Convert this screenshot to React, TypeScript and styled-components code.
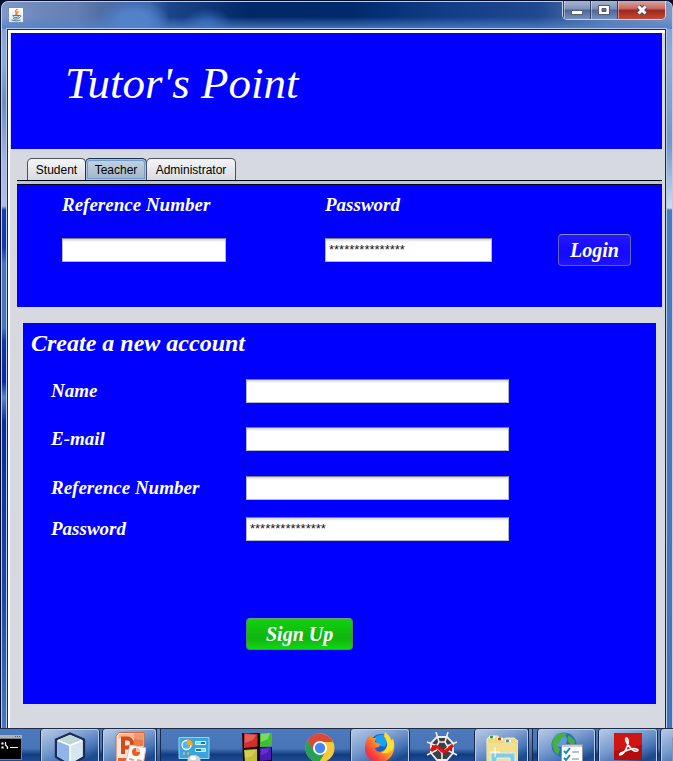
import React from "react";
import styled, { createGlobalStyle, css } from "styled-components";

const script = `"Monotype Corsiva", "Liberation Serif", serif`;

const GlobalStyle = createGlobalStyle`
  *, *::before, *::after { box-sizing: border-box; }
  body { margin: 0; background: #06102c; font-family: "Liberation Sans", Arial, sans-serif; }
  button, input { font: inherit; margin: 0; }
`;

const Desktop = styled.div`
  min-height: 100vh;
  display: flex;
  flex-direction: column;
  overflow: hidden;
`;

const AppWindow = styled.section`
  flex: 1;
  display: flex;
  flex-direction: column;
  margin: 1px 0 0 1px;
  padding: 0 6px 0 5px;
  border: 1px solid #b9cdea;
  border-bottom: 0;
  border-radius: 7px 7px 0 0;
  background:
    linear-gradient(180deg, #7f9fd0 0, #8fabd8 60px, #6d8ebc 100px, #a9b6e2 160px, #b4bcec 204px, #1a3cae 208px, #1836b4 245px, #4878c0 262px, #4878c0 325px, #1434a8 340px, #0c28a4 380px, #5a84cc 395px, #0d2a9c 420px, #2046ac 600px, #4a78be 100%) left / 6px 100% no-repeat,
    linear-gradient(180deg, #7f9fd0 0, #8fabd8 60px, #7496c8 140px, #cfdaf0 206px, #4a7abf 208px, #4474b8 100%) right / 7px 100% no-repeat,
    #4a76ba;
`;

const TitleBar = styled.header`
  display: flex;
  justify-content: space-between;
  align-items: flex-start;
  height: 27px;
  margin: 0 -6px 0 -5px;
  padding: 0 6px;
  border-radius: 6px 6px 0 0;
  background:
    linear-gradient(180deg, rgba(90, 140, 210, 0) 55%, rgba(80, 130, 205, 0.85) 100%),
    radial-gradient(ellipse 36px 20px at 132px 18px, rgba(84, 132, 204, 0.9) 40%, rgba(84, 132, 204, 0) 100%),
    radial-gradient(ellipse 24px 14px at 205px 20px, rgba(47, 98, 176, 0.9) 20%, rgba(47, 98, 176, 0) 100%),
    linear-gradient(90deg, #8098cc 0, #6c86b8 6%, #6480b4 11%, #506ea4 15%, #3c64ac 22%, #1c4488 25%, #002868 37%, #002a6c 52%, #123c86 66%, #1f4890 80%, #5f7cb0 90%, #7e96c4 100%);
`;

const JavaBadge = styled.span`
  display: flex;
  margin-top: 5px;
  border: 1px solid #7490b4;
  background: linear-gradient(#ffffff, #dfe7ef);
`;

const Controls = styled.div`
  display: flex;
  height: 19px;
  margin-top: -1px;
  border: 1px solid #c8d4ea;
  border-top: 0;
  border-radius: 0 0 5px 5px;
  overflow: hidden;
`;

const ControlButton = styled.button<{ $close?: boolean }>`
  display: flex;
  align-items: center;
  justify-content: center;
  width: ${(p) => (p.$close ? 48 : 27)}px;
  padding: 0;
  border: 0;
  border-left: 1px solid #35425e;
  box-shadow: inset 1px 0 rgba(255, 255, 255, 0.4);
  background: ${(p) =>
    p.$close
      ? "linear-gradient(#d8a8a4, #c4625c 45%, #a02418 50%, #c04c38)"
      : "linear-gradient(#a8b4d0, #7e90b8 45%, #4c6498 50%, #7890c0)"};
`;

const Client = styled.main`
  flex: 1;
  display: flex;
  flex-direction: column;
  border: 1px solid #18284c;
  border-bottom: 0;
  background: #d6d9df;
  box-shadow: 0 0 0 1px #b4c8e8, inset 2px 2px #ffffff, inset 0 3px #fffff0;
  padding: 3px 3px 24px 3px;
`;

const Banner = styled.div`
  height: 116px;
  padding: 26px 54px;
  background: #0000ff;
`;

const Brand = styled.h1`
  margin: 0;
  color: #ffffff;
  font: italic 400 45px/48px ${script};
  white-space: nowrap;
`;

const TabList = styled.div`
  display: flex;
  margin: 9px 0 0 6px;
  padding-left: 10px;
  border-bottom: 1px solid #000014;
`;

const Tab = styled.button<{ $width: number; $active?: boolean }>`
  min-width: ${(p) => p.$width}px;
  height: 22px;
  padding: 0 7px;
  margin-right: -1px;
  border: 1px solid #4c5058;
  border-bottom: 0;
  border-radius: 5px 5px 0 0;
  background: linear-gradient(#f4f5f7, #d8dbe2);
  color: #000000;
  font-size: 12px;
  line-height: 20px;
  white-space: nowrap;
  ${(p) =>
    p.$active &&
    css`
      border-color: #1c3450;
      background: linear-gradient(#c6d3e0, #9fb4c8);
      box-shadow: inset 0 0 0 1px #a8c4e0, inset 0 0 0 2px #70a0d0;
    `}
`;

const LoginPanel = styled.form`
  display: grid;
  grid-template-columns: 263fr 233fr 104fr;
  align-items: start;
  margin-left: 6px;
  height: 126px;
  padding-left: 45px;
  border-top: 3px solid #b4c8dc;
  background: #0000ff;
  box-shadow: inset 0 1px #000014;
`;

const LoginField = styled.div`
  display: flex;
  flex-direction: column;
  gap: 21px;
  padding-top: 9px;
`;

const Label = styled.label`
  color: #ffffff;
  font: italic 700 19px/24px ${script};
  white-space: nowrap;
`;

const TextInput = styled.input<{ $width: number }>`
  width: ${(p) => p.$width}px;
  height: 24px;
  padding: 0 3px 1px;
  border: 1px solid #b4b8c0;
  border-top-color: #808080;
  border-radius: 0;
  outline: 0;
  background: linear-gradient(#d4d4d4, #ffffff 3px);
  color: #141414;
  font-size: 13px;
`;

const ActionButton = styled.button<{ $green?: boolean }>`
  justify-self: start;
  height: 32px;
  padding: 0 ${(p) => (p.$green ? 19 : 11)}px;
  border: 1px solid ${(p) => (p.$green ? "#4c8a50" : "#6464b4")};
  border-top-color: ${(p) => (p.$green ? "#70a070" : "#8888c4")};
  border-radius: 4px;
  background: ${(p) =>
    p.$green ? "linear-gradient(#10d010, #10b410 65%, #12d812)" : "linear-gradient(#2418ff, #1408ff 60%, #2014ff)"};
  color: #ffffff;
  font: italic 700 20px/28px ${script};
  white-space: nowrap;
`;

const LoginAction = styled.div`
  padding-top: 50px;
`;

const SignUpPanel = styled.form`
  flex: 1;
  margin: 16px 6px 0 12px;
  padding: 6px 8px 53px;
  background: #0000ff;
`;

const PanelTitle = styled.h2`
  margin: 0;
  color: #ffffff;
  font: italic 700 24px/28px ${script};
`;

const FieldRow = styled.div<{ $gap: number }>`
  display: grid;
  grid-template-columns: 195px 1fr;
  align-items: center;
  height: 24px;
  margin: ${(p) => p.$gap}px 0 0 20px;
`;

const SignUpAction = styled.div`
  margin: 77px 0 0 215px;
`;

const Taskbar = styled.nav`
  flex: none;
  display: flex;
  height: 33px;
  overflow: hidden;
  border-top: 1px solid #1c2c44;
  background: linear-gradient(#4c7abc, #4874b8 60%, #123c80 80%, #1c4c94);
`;

const Task = styled.button<{ $w: number; $open?: boolean; $top?: number; $start?: boolean }>`
  flex: none;
  display: flex;
  align-items: flex-start;
  justify-content: ${(p) => (p.$start ? "flex-start" : "center")};
  width: ${(p) => p.$w}px;
  height: 40px;
  padding: ${(p) => p.$top ?? 3}px 0 0;
  border: 0;
  background: none;
  ${(p) =>
    p.$open &&
    css`
      border: 1px solid #b8cce8;
      border-bottom: 0;
      border-radius: 3px 3px 0 0;
      padding-top: ${(p.$top ?? 3) - 1}px;
      box-shadow: -1px 0 #14284c, 1px 0 #14284c;
      background: linear-gradient(155deg, #b4c8e4 0, #7c9ed0 35%, #4876b8 60%, #1c488c 78%, #2c5ca4 100%);
    `}
`;

const StackEdge = styled.span`
  flex: none;
  width: 5px;
  margin-right: 1px;
  border-right: 1px solid #14284c;
  border-left: 1px solid #14284c;
  background: linear-gradient(#6c92c8, #2c5898);
`;

const Spacer = styled.span<{ $w: number }>`
  flex: none;
  width: ${(p) => p.$w}px;
`;

const JavaIcon = () => (
  <svg width="14" height="14" viewBox="0 0 14 14" fill="none">
    <path d="M8.500 1C4 3.500 9 4 6.500 7M9.500 3.500C6.500 5 9 5.500 7.500 7" stroke="#ed852c" strokeWidth="1.400" />
    <path d="M3.500 7.500h6.500M4 8.500c1 1.500 5 1 6 0M4 10.500c2 1 4 .7 5.500 0M10 7.500c3-.8 2 2-.5 2.500M2.500 12c3 1.200 7 1 9 0" stroke="#4e7896" />
  </svg>
);

const CmdIcon = () => (
  <svg width="22" height="25" viewBox="0 0 22 25">
    <rect x="-2" width="24" height="25" fill="#777d83" />
    <rect x="-2" width="24" height="3" fill="#a8b0b8" />
    <path d="M15 1.500h1M17 1.500h1M19 1.500h1" stroke="#555" />
    <rect x="-2" y="4" width="23" height="20" fill="#000" />
    <path d="M2 8h1v1H2zM2 12h1v1H2zM5.500 7v3l2 2v2M10 12.500h8" stroke="#fff" fill="none" strokeWidth="1.200" />
  </svg>
);

const CubeIcon = () => (
  <svg width="32" height="34" viewBox="0 0 32 34">
    <path d="M16 1.500 30 7.500V25L16 33 2 25V7.500z" fill="#dce9ef" stroke="#1d2a55" strokeWidth="2.400" strokeLinejoin="round" />
    <path d="m16 3 12 5-12 5L4 8z" fill="#bdd7d4" />
    <path d="M3.500 9 16 14v18L3.500 24.500z" fill="#8fb4ec" />
    <path d="M28.500 9 16 14v18l12.500-7.500z" fill="#d4e6ef" />
    <path d="M4 8.500 16 13.500l12-5M16 14v18" stroke="#fff" strokeWidth="1.600" fill="none" />
  </svg>
);

const PowerPointIcon = () => (
  <svg width="32" height="32" viewBox="0 0 32 32">
    <path d="M5 .500h25V32H2V4z" fill="#fbe4d8" stroke="#d8623a" />
    <path d="M20 1.500h9V14h-9z" fill="#ee7a48" />
    <path d="m5 2 24-.5V8C20 8 14 2 4 7z" fill="#f4a27c" opacity=".7" />
    <path d="M4 26h16v6H4z" fill="#e4602c" />
    <path d="M9 22V6.500h4.500a4.500 4.500 0 0 1 0 9H10" fill="none" stroke="#d24a16" strokeWidth="4" />
    <path d="m16 13 16 3-3 16-17-3z" fill="#fff" stroke="#e8c0ac" />
    <circle cx="22" cy="20" r="4" fill="#f15a24" /><path d="M22 20v-4a4 4 0 0 1 4 4z" fill="#ffc7a8" />
    <path d="m15 27 5 1m3 0 5 1" stroke="#efa27f" strokeWidth="2" />
  </svg>
);

const ControlPanelIcon = () => (
  <svg width="32" height="28" viewBox="0 0 32 28">
    <path d="M1 .5h30v21H1z" fill="#3ba4dd" stroke="#8fd8f2" />
    <circle cx="8.500" cy="8" r="4.500" fill="#58b5e2" stroke="#fff" strokeWidth="1.300" />
    <path d="M9 8V2a6 6 0 0 1 6 6z" fill="#f7a525" />
    <path d="M17.500 4.500h10v3h-10zM17.500 11.500h10v3h-10z" fill="#1974b8" stroke="#d5f5ff" />
    <path d="M18 6h5M23 13h4" stroke="#75e1ff" strokeWidth="2" />
    <path d="M5 16.500h2M9 16.500h2" stroke="#ffad42" strokeWidth="2" />
    <ellipse cx="16" cy="23" rx="6.500" ry="5" fill="#d2d2d2" /><ellipse cx="15" cy="21" rx="3" ry="2" fill="#fff" />
  </svg>
);

const BlocksIcon = () => (
  <svg width="30" height="30" viewBox="0 0 30 30">
    <path d="M0 0h18v29H1z" fill="#120c10" /><path d="M16 14h14v15H16z" fill="#120c10" />
    <path d="m2 0 13.500 1v12.500L2 15z" fill="#cf2f2f" /><path d="m3 1 11 1-3 5-8 3z" fill="#e0605a" />
    <path d="M18 0h12v13l-12 1z" fill="#43bb31" /><path d="m19 1 9-1-2 6-7 3z" fill="#78db62" />
    <path d="m2 17 13-1v13H3z" fill="#c5bd33" /><path d="m3 18 11-1-4 6-7 2z" fill="#d4ce58" />
    <path d="m18 15 11-1v13l-11 1z" fill="#4b19b8" /><path d="m19 16 9-1-3 5-6 2z" fill="#6034c8" />
  </svg>
);

const ChromeIcon = () => (
  <svg width="30" height="30" viewBox="0 0 30 30">
    <circle cx="15" cy="15" r="14.500" fill="#f7c934" />
    <path d="M2.500 7.500A14.500 14.500 0 0 1 28 9H15l-6.500 9z" fill="#dc493b" />
    <path d="M2.500 7.500A14.500 14.500 0 0 0 14 29.500l7-11.500H9z" fill="#269f59" />
    <circle cx="15" cy="15" r="7" fill="#fff" /><circle cx="15" cy="15" r="5.200" fill="#4488ed" />
  </svg>
);

const FirefoxIcon = () => (
  <svg width="31" height="31" viewBox="0 0 31 31">
    <defs>
      <linearGradient id="fox" x1="1" y1="0" x2="0" y2="1"><stop stopColor="#ffeb39" /><stop offset=".45" stopColor="#ff982d" /><stop offset=".75" stopColor="#f73b3b" /><stop offset="1" stopColor="#e31587" /></linearGradient>
    </defs>
    <circle cx="16" cy="13" r="11" fill="#125fd0" />
    <path d="M10 5c4-3 10-3 14 1l-4 9-8-2z" fill="#16a3f2" />
    <path d="M2 7 4 3l3 3h4l-1 4 5 2-1 3-4 1c1 5 8 5 11 0s2-9-2-11c0-3 1-4 1-5 3 3 5 4 6 8l2-1c3 7 1 18-7 22-9 5-20-1-21-11C0 13 1 10 2 7z" fill="url(#fox)" />
    <path d="M20 0c-1 5 1 7 2 10 1 7-3 10-6 11 10 2 15-5 12-12l-2-1c-1-4-4-5-6-8z" fill="#ffdf2d" />
  </svg>
);

const SpiderIcon = () => (
  <svg width="32" height="31" viewBox="0 0 32 31">
    <path d="M11 5h10l6 6v10l-6 7H11l-6-7V11z" fill="#3c3f44" stroke="#eee" strokeWidth="1.800" />
    <path d="m10 0 3 10M22 0l-3 10M1 10l10 4M31 10l-10 4M1 23l10-5M31 23l-10-5M16 20v11M13 10h6l3 5-6 6-6-6z" stroke="#eee" strokeWidth="1.600" fill="none" />
    <path d="M5 19c4-7 7-4 10-1s6 1 12-5" stroke="#f20b0b" strokeWidth="3.200" fill="none" />
  </svg>
);

const FolderIcon = () => (
  <svg width="32" height="30" viewBox="0 0 32 30">
    <path d="M1 4 4 1h8l1 3h5l2-1h8l4 3v24H1z" fill="#efd983" stroke="#fff0b0" />
    <path d="M3 2h6M11 4h6M19 6h6" stroke="#fff" strokeWidth="2.500" />
    <path d="M4 2h3" stroke="#22a83a" strokeWidth="2.500" /><path d="M12 4h3" stroke="#d63b2c" strokeWidth="2.500" /><path d="M20 6h3" stroke="#3a91dd" strokeWidth="2.500" />
    <path d="M1 8h29v22H1z" fill="#f4df8d" />
    <path d="M5 30V18h24v12h-5v-7H11v7z" fill="#7dcde8" stroke="#d7f4ff" />
    <path d="M9 12v10M4 17h10" stroke="#fff" />
  </svg>
);

const GlobeIcon = () => (
  <svg width="32" height="31" viewBox="0 0 32 31">
    <circle cx="13" cy="13" r="12.500" fill="#216fc1" /><circle cx="9" cy="8" r="7" fill="#569ee1" />
    <path d="M3 6 9 1h7l-2 4-4 1-1 4-4 3 4 4-2 6C2 19-1 12 3 6zM18 3l6 6-1 5-5-3-2-4z" fill="#48ae3c" />
    <path d="M10.500 12.500h21v20h-21z" fill="#fff" stroke="#8d939d" /><path d="M11 14h20" stroke="#c7d0d9" strokeWidth="2" />
    <path d="m13 19 2 2 4-5m-6 10 2 2 4-5" stroke="#118bb6" strokeWidth="2" fill="none" />
    <path d="M21 20h7M21 27h7" stroke="#7b8490" />
  </svg>
);

const AcrobatIcon = () => (
  <svg width="28" height="27" viewBox="0 0 28 27">
    <path d="M0 0h28v27H0z" fill="#b50c0c" /><path d="M0 0h28v12L0 18z" fill="#d01515" />
    <path d="M6 22c5-1 9-11 8-15s-4-2-1 3 7 9 10 8-1-4-9-1-9 4-8 5z" fill="none" stroke="#fff" strokeWidth="1.600" />
  </svg>
);

const signUpFields = [
  { id: "name", label: "Name", gap: 22, value: "" },
  { id: "email", label: "E-mail", gap: 24, value: "" },
  { id: "reference", label: "Reference Number", gap: 25, value: "" },
  { id: "new-password", label: "Password", gap: 17, value: "***************" },
];

export default function App() {
  return (
    <>
      <GlobalStyle />
      <Desktop>
        <AppWindow>
          <TitleBar>
            <JavaBadge><JavaIcon /></JavaBadge>
            <Controls>
              <ControlButton aria-label="Minimize">
                <svg width="12" height="12"><path d="M.5 6.500h11v4H.5z" fill="#fff" stroke="#555e72" /></svg>
              </ControlButton>
              <ControlButton aria-label="Maximize">
                <svg width="12" height="10"><path d="M.5.500h11v9H.5zM4 3.500h4v3H4z" fill="#fff" fillRule="evenodd" stroke="#555e72" /></svg>
              </ControlButton>
              <ControlButton $close aria-label="Close">
                <svg width="12" height="10" viewBox="0 0 12 10">
                  <path d="m2.500 1.500 7 7m0-7-7 7" stroke="#59475a" strokeWidth="5" />
                  <path d="m2.500 1.500 7 7m0-7-7 7" stroke="#fff" strokeWidth="3" />
                </svg>
              </ControlButton>
            </Controls>
          </TitleBar>
          <Client>
            <Banner><Brand>Tutor's Point</Brand></Banner>
            <TabList role="tablist">
              <Tab role="tab" $width={59}>Student</Tab>
              <Tab role="tab" $width={62} aria-selected $active>Teacher</Tab>
              <Tab role="tab" $width={90}>Administrator</Tab>
            </TabList>
            <LoginPanel onSubmit={(e) => e.preventDefault()}>
              <LoginField>
                <Label htmlFor="login-reference">Reference Number</Label>
                <TextInput id="login-reference" $width={164} />
              </LoginField>
              <LoginField>
                <Label htmlFor="login-password">Password</Label>
                <TextInput id="login-password" $width={167} defaultValue="***************" />
              </LoginField>
              <LoginAction><ActionButton>Login</ActionButton></LoginAction>
            </LoginPanel>
            <SignUpPanel onSubmit={(e) => e.preventDefault()}>
              <PanelTitle>Create a new account</PanelTitle>
              {signUpFields.map((f) => (
                <FieldRow key={f.id} $gap={f.gap}>
                  <Label htmlFor={f.id}>{f.label}</Label>
                  <TextInput id={f.id} $width={263} defaultValue={f.value} />
                </FieldRow>
              ))}
              <SignUpAction><ActionButton $green>Sign Up</ActionButton></SignUpAction>
            </SignUpPanel>
          </Client>
        </AppWindow>
        <Taskbar>
          <Task $w={41} $top={6} $start aria-label="Command Prompt"><CmdIcon /></Task>
          <Task $w={58} $open aria-label="VirtualBox"><CubeIcon /></Task>
          <Spacer $w={4} />
          <Task $w={53} $open aria-label="PowerPoint"><PowerPointIcon /></Task>
          <StackEdge />
          <Task $w={64} $top={8} aria-label="Control Panel"><ControlPanelIcon /></Task>
          <Task $w={62} $top={4} aria-label="Blocks"><BlocksIcon /></Task>
          <Task $w={63} $top={4} aria-label="Chrome"><ChromeIcon /></Task>
          <Task $w={58} $open aria-label="Firefox"><FirefoxIcon /></Task>
          <Task $w={66} aria-label="Spider"><SpiderIcon /></Task>
          <Task $w={53} $top={6} $open aria-label="File Explorer"><FolderIcon /></Task>
          <StackEdge />
          <Spacer $w={4} />
          <Task $w={57} $open aria-label="Internet Tasks"><GlobeIcon /></Task>
          <Spacer $w={4} />
          <Task $w={58} $top={4} $open aria-label="Acrobat Reader"><AcrobatIcon /></Task>
          <Spacer $w={4} />
          <Task $w={58} $open aria-label="Document" $top={8}>
            <svg width="36" height="30"><path d="M.5.500h35v29H.5z" fill="#f4f8fc" stroke="#8098b8" /></svg>
          </Task>
        </Taskbar>
      </Desktop>
    </>
  );
}
